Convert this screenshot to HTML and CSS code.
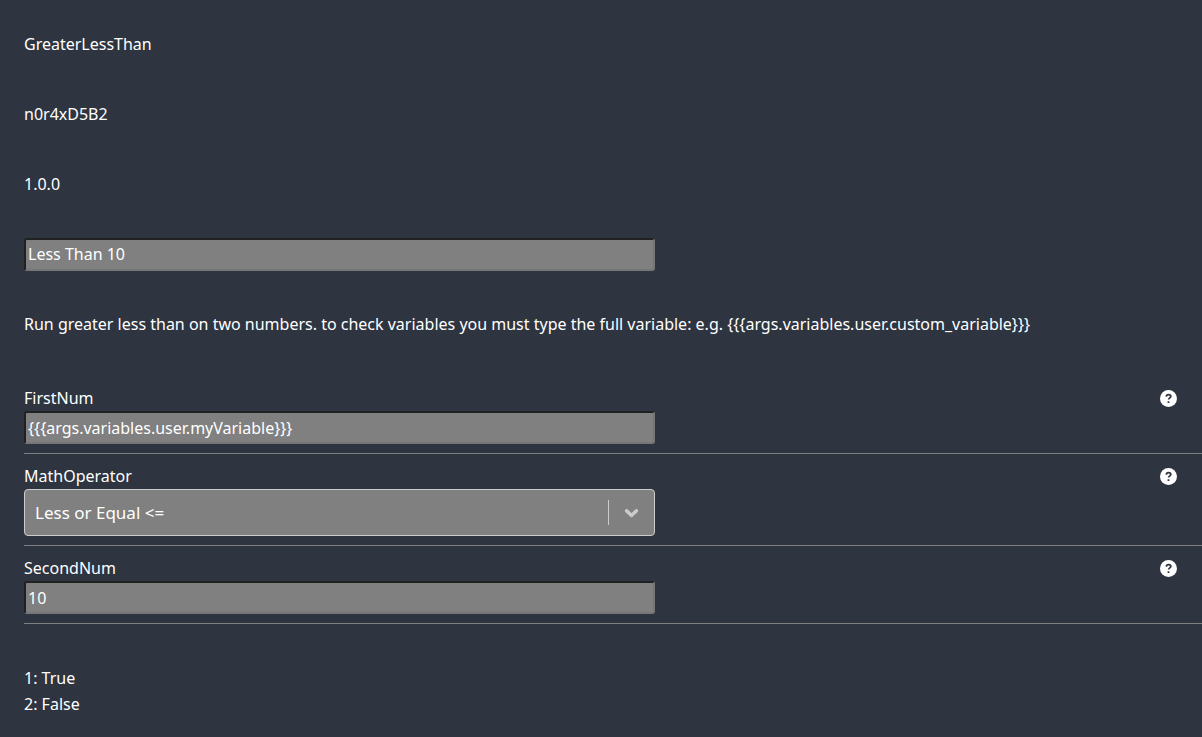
FILE: index.html
```html
<!DOCTYPE html>
<html lang="en">
<head>
<meta charset="utf-8">
<meta name="viewport" content="width=device-width, initial-scale=1">
<title>GreaterLessThan</title>
<link rel="stylesheet" href="styles.css">
</head>
<body>
<svg class="defs" aria-hidden="true">
  <symbol id="help" viewBox="0 0 17 17"><circle class="disc" cx="8.5" cy="8.5" r="8.5"/><path class="mark" d="M6.3 6.6c.1-1.2 1-1.9 2.3-1.9 1.3 0 2.2.7 2.2 1.8 0 1.4-2.2 1.4-2.2 3.1M8.5 11.2v1.7"/></symbol>
</svg>
<main class="panel">
  <div class="row">GreaterLessThan</div>
  <div class="row">n0r4xD5B2</div>
  <div class="row">1.0.0</div>
  <div class="row"><input class="text-input" type="text" aria-label="Name" value="Less Than 10"></div>
  <div class="row">Run greater less than on two numbers. to check variables you must type the full variable: e.g. {{{args.variables.user.custom_variable}}}</div>
  <form class="fields">
    <div class="field">
      <div class="field-head">
        <label for="first">FirstNum</label>
        <button class="help" type="button" aria-label="Help for FirstNum"><svg class="help-icon"><use href="#help"/></svg></button>
      </div>
      <input class="text-input" id="first" type="text" value="{{{args.variables.user.myVariable}}}">
    </div>
    <div class="field">
      <div class="field-head">
        <label for="operator">MathOperator</label>
        <button class="help" type="button" aria-label="Help for MathOperator"><svg class="help-icon"><use href="#help"/></svg></button>
      </div>
      <div class="select-box">
        <select class="select" id="operator"><option>Less or Equal &lt;=</option></select>
        <span class="indicator"><svg class="chevron" viewBox="0 0 20 20"><path d="M4.516 7.548c0.436-0.446 1.043-0.481 1.576 0l3.908 3.747 3.908-3.747c0.533-0.481 1.141-0.446 1.574 0 0.436 0.445 0.408 1.197 0 1.615-0.406 0.418-4.695 4.502-4.695 4.502-0.217 0.223-0.502 0.335-0.787 0.335s-0.57-0.112-0.789-0.335c0 0-4.287-4.084-4.695-4.502s-0.436-1.17 0-1.615z"/></svg></span>
      </div>
    </div>
    <div class="field">
      <div class="field-head">
        <label for="second">SecondNum</label>
        <button class="help" type="button" aria-label="Help for SecondNum"><svg class="help-icon"><use href="#help"/></svg></button>
      </div>
      <input class="text-input" id="second" type="text" value="10">
    </div>
  </form>
  <div class="outputs">
    <div>1: True</div>
    <div>2: False</div>
  </div>
</main>
</body>
</html>
```
FILE: styles.css
```css
* { box-sizing: border-box; }
body {
  margin: 0;
  background: #2e3440;
  color: #fff;
  font: 16px/26px "Noto Sans", sans-serif;
}
.defs { display: none; }
.panel { padding: 9px 0 20px 24px; }
.row { display: flex; align-items: center; min-height: 70px; }
.text-input {
  display: block;
  width: calc(50% + 42px);
  height: 33px;
  padding: 1px 2px;
  border: 2px solid;
  border-color: #212121 #767676 #767676 #212121;
  border-radius: 3px;
  background: #808080;
  color: #fff;
  font: inherit;
}
.fields { padding-top: 17px; }
.field { padding: 9px 0; border-bottom: 1px solid #808080; }
.field-head {
  display: flex;
  align-items: center;
  justify-content: space-between;
  padding-right: 25px;
}
.help {
  display: flex;
  padding: 0;
  border: 0;
  background: none;
  color: #fff;
}
.help-icon { width: 17px; height: 17px; }
.disc { fill: currentColor; }
.mark { fill: none; stroke: #2e3440; stroke-width: 1.8; }
.select-box { display: grid; width: calc(50% + 42px); }
.select {
  grid-area: 1 / 1;
  appearance: none;
  width: 100%;
  height: 47px;
  padding: 0 56px 0 10px;
  border: 1px solid #ccc;
  border-radius: 4px;
  background: #808080;
  color: #fff;
  font: inherit;
  font-size: 17px;
}
.indicator {
  grid-area: 1 / 1;
  display: flex;
  align-items: center;
  justify-self: end;
  align-self: center;
  height: 25px;
  margin-right: 13px;
  padding-left: 12px;
  border-left: 1px solid #ccc;
  pointer-events: none;
}
.chevron { width: 21px; height: 21px; fill: #ccc; stroke: #ccc; }
.outputs { padding-top: 41px; }
```
